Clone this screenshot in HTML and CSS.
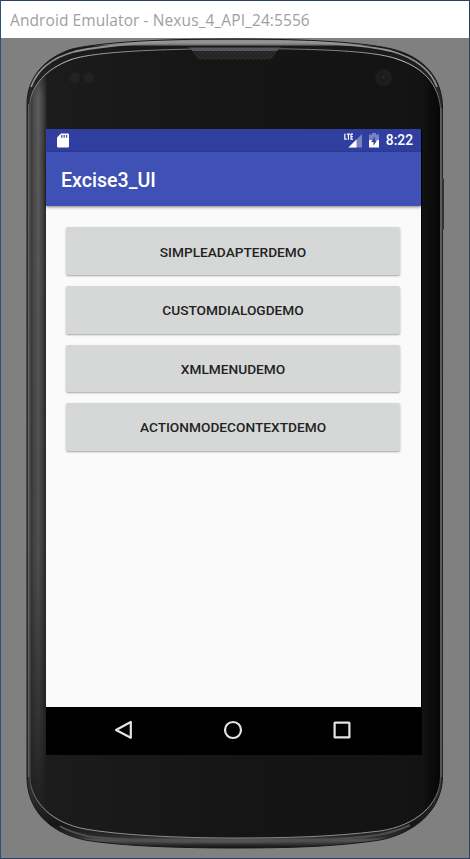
FILE: index.html
```
<!DOCTYPE html>
<html lang="en">
<head>
<meta charset="utf-8">
<title>Android Emulator</title>
<link rel="stylesheet" href="styles.css">
</head>
<body>
<div class="window">
  <header class="titlebar"><span class="window-title">Android Emulator - Nexus_4_API_24:5556</span></header>
  <main class="device">
    <svg class="shell" viewBox="0 38 470 821" aria-hidden="true">
      <defs>
        <linearGradient id="rim" x1="0" y1="38" x2="0" y2="849" gradientUnits="userSpaceOnUse">
          <stop offset="0" stop-color="#151515"/><stop offset=".004" stop-color="#aaa"/><stop offset=".008" stop-color="#777"/><stop offset=".0105" stop-color="#17181a"/><stop offset=".1" stop-color="#303030"/><stop offset=".5" stop-color="#414141"/><stop offset=".93" stop-color="#303030"/><stop offset=".97" stop-color="#151515"/><stop offset=".985" stop-color="#2c2d2e"/><stop offset=".989" stop-color="#55575a"/><stop offset=".994" stop-color="#333"/><stop offset="1" stop-color="#050505"/>
        </linearGradient>
        <linearGradient id="side" x1="29" y1="0" x2="48" y2="0" gradientUnits="userSpaceOnUse">
          <stop offset="0" stop-color="#2b2b2b"/><stop offset=".25" stop-color="#4c4c4c"/><stop offset=".5" stop-color="#5c5c5c"/><stop offset=".75" stop-color="#404040"/><stop offset="1" stop-color="#191919"/>
        </linearGradient>
        <linearGradient id="face" x1="0" y1="0" x2="1" y2="0">
          <stop offset="0" stop-color="#1c1c1c"/><stop offset=".5" stop-color="#151515"/><stop offset=".95" stop-color="#131313"/><stop offset="1" stop-color="#050505"/>
        </linearGradient>
        <linearGradient id="fade" x1="0" y1="65" x2="0" y2="825" gradientUnits="userSpaceOnUse">
          <stop offset="0" stop-color="#fff" stop-opacity=".3"/><stop offset=".04" stop-color="#fff"/><stop offset=".65" stop-color="#fff" stop-opacity=".8"/><stop offset=".85" stop-color="#fff" stop-opacity=".4"/><stop offset="1" stop-color="#fff" stop-opacity="0"/>
        </linearGradient>
        <linearGradient id="line" x1="0" y1="48" x2="0" y2="839" gradientUnits="userSpaceOnUse">
          <stop offset="0" stop-color="#70727a"/><stop offset=".015" stop-color="#c8c8c8"/><stop offset=".07" stop-color="#606060"/><stop offset=".93" stop-color="#555"/><stop offset=".97" stop-color="#a0a0a0"/><stop offset="1" stop-color="#85878a"/>
        </linearGradient>
        <mask id="fademask" maskUnits="userSpaceOnUse" x="20" y="38" width="30" height="812"><rect x="20" y="38" width="30" height="812" fill="url(#fade)"/></mask>
        <pattern id="mesh" width="4" height="4" patternUnits="userSpaceOnUse"><rect width="4" height="4" fill="#2b2b2b"/><circle cx="1" cy="1" r=".7" fill="#151515"/><circle cx="3" cy="3" r=".7" fill="#151515"/></pattern>
        <clipPath id="glass"><path d="M30 104C31 86 46 69 70 60C92 51.500 160 49 234 48.500C320 48.500 375 51 397 59C424 68 438 84 440.500 108V777C440 805 415 826 380 831C330 837 285 838 234 838C175 838 120 835 85 829C52 823 31 802 30 778Z"/></clipPath>
      </defs>
      <path fill="url(#rim)" stroke="#191919" d="M27 104C27 78 44 58 72 49C110 40.500 180 39 234 39C293 39 357 41 392 49C424 57 442.500 78 442.500 108V777C442 812 412 834 380 840C335 847 285 848 234 848C178 848 120 846 85 840C47 832 27 808 27 777Z"/>
      <path fill="none" stroke="#929292" stroke-width="1.800" d="M31 87C37 70 51 58 75 51.500C116 42.500 180 41 234 41C293 41 357 43 391 51C415 58 431 70 437 87"/>
      <path fill="none" stroke="#4e4f50" stroke-width="2" d="M60 826C67 831 79 834 87 836C120 841 178 842 234 842C285 842 335 841 378 835C393 832 402 829 410 825"/>
      <path fill="none" stroke="#777" stroke-width=".7" d="M28.500 104V777M441.700 108V777"/>
      <g clip-path="url(#glass)">
        <rect x="29" y="46" width="413" height="794" fill="url(#face)"/>
        <rect x="29" y="46" width="18" height="794" fill="url(#side)" mask="url(#fademask)"/>
      </g>
      <path fill="none" stroke="url(#line)" d="M30 104C31 86 46 69 70 60C92 51.500 160 49 234 48.500C320 48.500 375 51 397 59C424 68 438 84 440.500 108V777C440 805 415 826 380 831C330 837 285 838 234 838C175 838 120 835 85 829C52 823 31 802 30 778Z"/>
      <path fill="url(#mesh)" d="M188 48H281C275 50 276 58 269 59.500H200C194 58 195 52 188 48Z"/>
      <path fill="#55565e" d="M188 47.500H281L277 51H193Z"/>
      <g fill="#222"><circle cx="75" cy="78" r="5.500"/><circle cx="89" cy="78" r="5.500"/></g>
      <circle cx="383.500" cy="77.500" r="8.500" fill="#1e1e1e"/><circle cx="383.500" cy="77.500" r="4" fill="#1b1b1f"/><circle cx="383.300" cy="77.300" r="1.300" fill="#29294d"/>
      <path fill="#333" d="M442 177L444 179V229L442 232Z"/>
    </svg>
    <div class="screen">
      <div class="statusbar">
        <svg class="sd" viewBox="0 0 12 15"><path fill="#fff" d="M4 .5H11Q12 .5 12 1.500V13.500Q12 14.500 11 14.500H1Q0 14.500 0 13.500V4.500Z"/><path stroke="#4554ac" stroke-width="1.300" d="M4.800 2V4.700M7.200 2V4.700M9.600 2V4.700"/></svg>
        <div class="indicators">
          <svg class="signal" viewBox="0 0 18 15"><path fill="#7882c2" d="M18 1V14.500H4.500Z"/><path fill="#fff" d="M12.500 6.500V14.500H4.500Z"/><path fill="#303f9f" d="M0 0H9.500V7.500H0Z"/><path fill="none" stroke="#fff" stroke-width="1.200" d="M.8 .8V6.200H2.700M2.700 1.200H6M4.400 1.200V6.700M9 1.200H7V6.200H9M7 3.700H8.800"/></svg>
          <svg class="battery" viewBox="0 0 10 15"><path fill="#7882c2" d="M3 0H7V1.500H10V7H0V1.500H3Z"/><path fill="#fff" d="M0 7H10V14.500H0Z"/><path fill="#303f9f" d="M5.800 3.500L2.200 9H4.500V12.700L8 7.300H5.800Z"/></svg>
          <span class="clock">8:22</span>
        </div>
      </div>
      <div class="appbar">Excise3_UI</div>
      <div class="content">
        <button class="btn">SIMPLEADAPTERDEMO</button>
        <button class="btn">CUSTOMDIALOGDEMO</button>
        <button class="btn">XMLMENUDEMO</button>
        <button class="btn">ACTIONMODECONTEXTDEMO</button>
      </div>
      <nav class="navbar">
        <svg viewBox="0 0 20 20"><path d="M16.800 2V17.800L2 10Z"/></svg>
        <svg viewBox="0 0 20 20"><circle cx="10" cy="10" r="8"/></svg>
        <svg viewBox="0 0 20 20"><rect x="2.600" y="2.600" width="14.800" height="14.800" rx=".5"/></svg>
      </nav>
    </div>
  </main>
</div>
</body>
</html>
```
FILE: styles.css
```
* { box-sizing: border-box; }
body { margin: 0; }
.window {
  width: 470px;
  height: 859px;
  display: flex;
  flex-direction: column;
  border: 1px solid #2a405c;
  border-left-color: #27527d;
  background: #808080;
  overflow: hidden;
}
.titlebar {
  height: 37px;
  flex: none;
  display: flex;
  align-items: center;
  padding-left: 9px;
  background: #fff;
}
.window-title {
  font: 400 15.5px/22px "Open Sans", "Noto Sans", sans-serif;
  letter-spacing: .09px;
  color: #a0a0a0;
  white-space: nowrap;
}
.device {
  position: relative;
  flex: 1;
  padding: 91px 0 0 45px;
}
.shell {
  position: absolute;
  left: -1px;
  top: 0;
  width: 470px;
  height: 821px;
}
.screen {
  position: relative;
  width: 376px;
  height: 626px;
  display: flex;
  flex-direction: column;
  font-family: Roboto, sans-serif;
  background: #000;
}
.statusbar {
  height: 23px;
  width: 375px;
  display: flex;
  justify-content: space-between;
  align-items: center;
  padding: 0 8px 0 11px;
  background: #303f9f;
}
.sd { width: 12px; height: 15px; }
.indicators { display: flex; align-items: center; }
.signal { width: 18px; height: 15px; margin-right: 7px; }
.battery { width: 10px; height: 15px; margin-right: 7px; }
.clock { font-size: 13.8px; font-weight: 500; line-height: 23px; color: #fff; }
.appbar {
  position: relative;
  width: 375px;
  height: 54px;
  padding-left: 15px;
  font-size: 19.6px;
  font-weight: 500;
  line-height: 58px;
  color: #fff;
  background: #3f51b5;
  box-shadow: 0 1px 3px rgba(0, 0, 0, .5);
}
.content {
  width: 375px;
  flex: 1;
  display: flex;
  flex-direction: column;
  gap: 11px;
  padding: 21.4px 21px 0 20px;
  background: #fafafa;
}
.btn {
  height: 47.6px;
  padding: 1px 0 0;
  border: 0;
  border-radius: 2px;
  font: 500 13.7px/18px Roboto, sans-serif;
  color: #222;
  background: #d6d8d7;
  box-shadow: 0 1px 2px rgba(0, 0, 0, .35);
}
.navbar {
  height: 48px;
  display: flex;
  justify-content: space-between;
  align-items: center;
  padding: 0 70px 2px 68px;
  background: #000;
}
.navbar svg {
  width: 20px;
  height: 20px;
  fill: none;
  stroke: #e4e4e4;
  stroke-width: 2.2;
  stroke-linejoin: round;
}
```
